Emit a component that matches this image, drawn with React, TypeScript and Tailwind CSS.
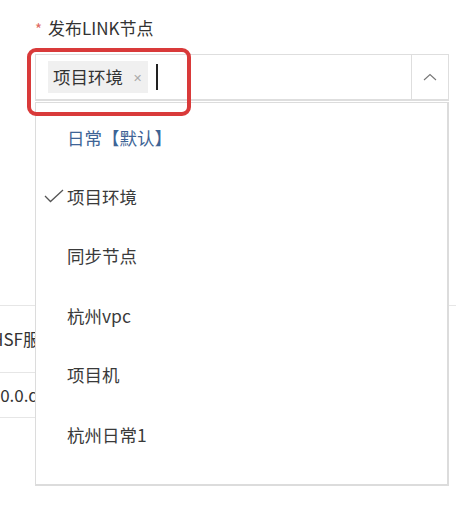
import React from "react";

const font = { fontFamily: '"Noto Sans CJK SC", "Noto Sans", sans-serif' };

const options = ["日常【默认】", "项目环境", "同步节点", "杭州vpc", "项目机", "杭州日常1"];

export default function App() {
  return (
    <div className="relative w-[470px] h-[516px] overflow-hidden bg-white text-[#333]" style={font}>
      {/* label */}
      <div className="flex items-center h-[24px] mt-[16px] pl-[35px] text-[17px]">
        <span className="text-[#e06a63] text-[15px] mr-[6px] leading-none">*</span>
        <span className="text-[#333]">发布LINK节点</span>
      </div>

      {/* select */}
      <div className="flex mt-[14px] ml-[35px] w-[414px] h-[47px] border border-[#dedede] border-b-2 bg-white">
        <div className="flex-1 flex items-center pl-[12px]">
          <div className="flex items-center h-[32px] w-[100px] bg-[#f0f0f0] pl-[5px] text-[17.5px] text-[#333]">
            <span>项目环境</span>
            <span className="ml-[10px] text-[11px] text-[#aaa]">✕</span>
          </div>
          <div className="ml-[8px] w-[2px] h-[26px] bg-[#222]"></div>
        </div>
        <div className="w-[37px] border-l border-[#dedede] flex items-center justify-center">
          <svg width="14" height="8" viewBox="0 0 14 8">
            <path d="M1 7 L7 1.5 L13 7" fill="none" stroke="#777" strokeWidth="1.1" />
          </svg>
        </div>
      </div>

      {/* background table */}
      <div className="mt-[204px] w-[456px]">
        <div className="border-t border-[#e6e6e6] h-[67px] flex items-center overflow-hidden">
          <span className="ml-[-9px] text-[17px] text-[#333] whitespace-nowrap">HSF服务名称</span>
        </div>
        <div className="w-[300px] border-t border-[#e6e6e6] h-[45px] flex items-center overflow-hidden">
          <span className="ml-[-14px] text-[17px] text-[#333] whitespace-nowrap">1.0.0.daily</span>
        </div>
        <div className="w-[300px] border-t border-[#e6e6e6]"></div>
      </div>

      {/* dropdown */}
      <div className="absolute top-[102px] left-[35px] w-[414px] h-[384px] bg-white border border-[#dcdcdc] border-b-2 border-r-2 pt-[5px]">
        {options.map((o, i) => (
          <div key={o} className="relative flex items-center h-[59.4px] pl-[31px] text-[17.5px]">
            {i === 1 && (
              <svg className="absolute left-[8px] top-[22px]" width="20" height="14" viewBox="0 0 20 14">
                <path d="M1 7 L6.5 12.5 L19 1" fill="none" stroke="#555" strokeWidth="1.3" />
              </svg>
            )}
            <span className={i === 0 ? "text-[#3e6496]" : "text-[#3a3a3a]"}>{o}</span>
          </div>
        ))}
      </div>

      {/* red highlight */}
      <div className="absolute left-[27px] top-[48px] w-[164px] h-[68px] border-[4px] border-[#d93a3a] rounded-[9px]"></div>
    </div>
  );
}
